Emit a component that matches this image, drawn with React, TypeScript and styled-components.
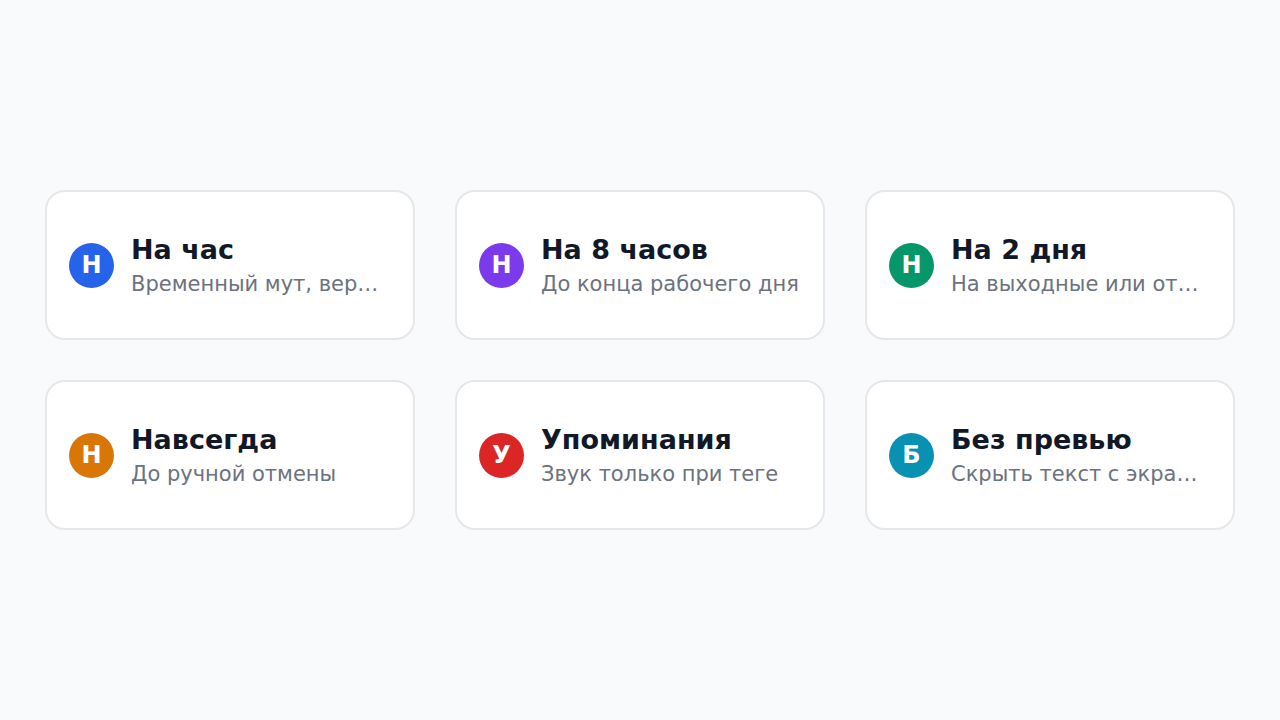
import React from 'react'
import styled, { createGlobalStyle } from 'styled-components'

type Option = {
  title: string
  hint: string
  color: string
}

const options: Option[] = [
  { title: 'На час', hint: 'Временный мут, вернётся через час', color: '#2563eb' },
  { title: 'На 8 часов', hint: 'До конца рабочего дня', color: '#7c3aed' },
  { title: 'На 2 дня', hint: 'На выходные или отпуск', color: '#059669' },
  { title: 'Навсегда', hint: 'До ручной отмены', color: '#d97706' },
  { title: 'Упоминания', hint: 'Звук только при теге', color: '#dc2626' },
  { title: 'Без превью', hint: 'Скрыть текст с экрана блокировки', color: '#0891b2' }
]

function App() {
  return (
    <>
      <GlobalStyle />
      <Page>
        <Grid>
          {options.map(o => (
            <Card key={o.title}>
              <Avatar color={o.color}>{o.title.charAt(0)}</Avatar>
              <Text>
                <Title>{o.title}</Title>
                <Hint>{o.hint}</Hint>
              </Text>
            </Card>
          ))}
        </Grid>
      </Page>
    </>
  )
}

const GlobalStyle = createGlobalStyle`
  html, body {
    margin: 0;
    background: #f9fafb;
    font-family: 'DejaVu Sans', 'Noto Sans', sans-serif;
  }
`

const Page = styled.div`
  min-height: 720px;
  display: flex;
  align-items: center;
  justify-content: center;
`

const Grid = styled.div`
  display: grid;
  grid-template-columns: repeat(3, 370px);
  gap: 40px;
`

const Card = styled.div`
  box-sizing: border-box;
  height: 150px;
  display: flex;
  align-items: center;
  gap: 17px;
  padding: 0 24px 0 22px;
  background: #ffffff;
  border: 2px solid #e5e7eb;
  border-radius: 20px;
`

const Avatar = styled.div<{ color: string }>`
  flex: none;
  width: 45px;
  height: 45px;
  border-radius: 50%;
  background: ${p => p.color};
  color: #ffffff;
  display: flex;
  align-items: center;
  justify-content: center;
  font-size: 24px;
  font-weight: 700;
`

const Text = styled.div`
  min-width: 0;
  padding-top: 2px;
  display: flex;
  flex-direction: column;
`

const Title = styled.div`
  font-size: 27px;
  font-weight: 700;
  line-height: 32px;
  color: #111827;
  white-space: nowrap;
  overflow: hidden;
  text-overflow: ellipsis;
`

const Hint = styled.div`
  margin-top: 4px;
  font-size: 21px;
  line-height: 28px;
  color: #6b7280;
  white-space: nowrap;
  overflow: hidden;
  text-overflow: ellipsis;
`

export default App
